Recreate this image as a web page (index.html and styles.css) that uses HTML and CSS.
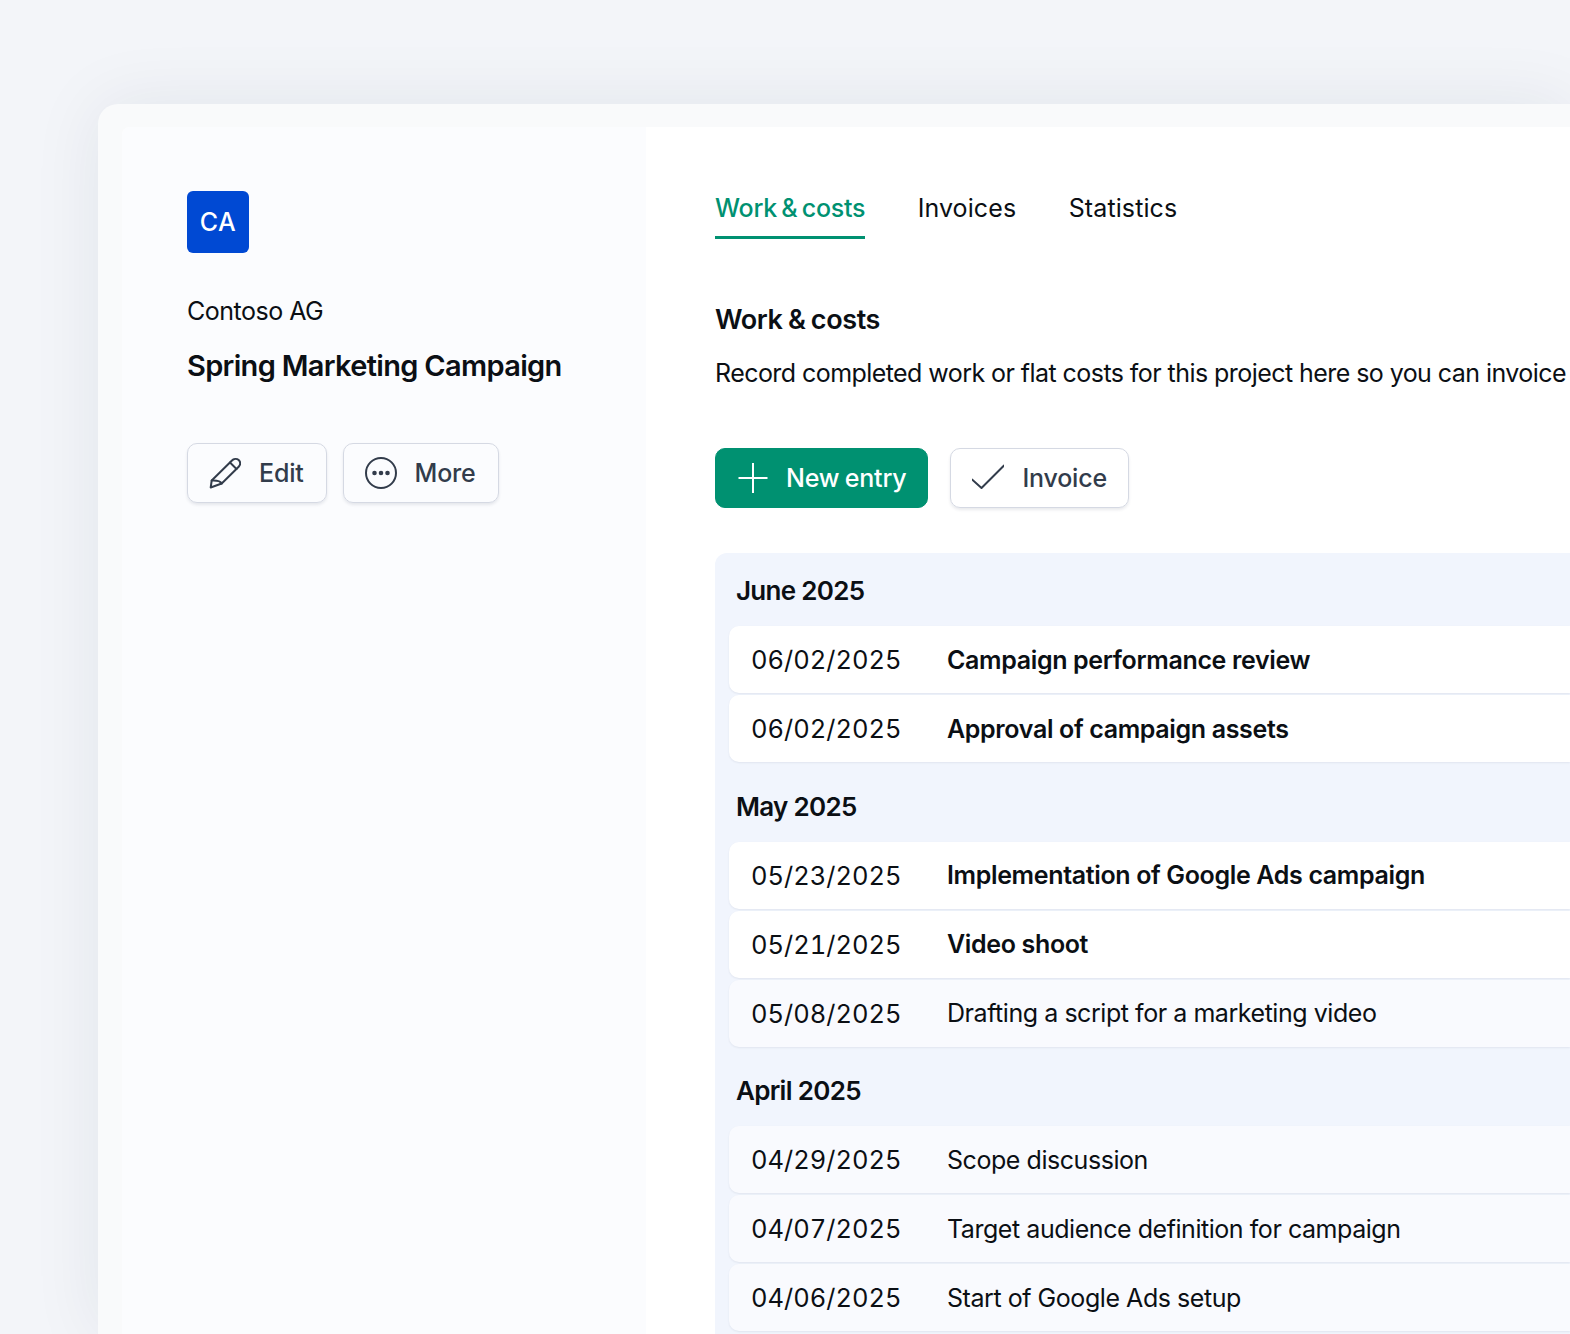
FILE: index.html
```html
<!DOCTYPE html>
<html lang="en">
<head>
<meta charset="utf-8">
<title>Spring Marketing Campaign</title>
<link rel="stylesheet" href="styles.css">
</head>
<body>
<div class="frame">
  <div class="inner">
    <aside class="sidebar">
      <div class="avatar">CA</div>
      <div class="client">Contoso AG</div>
      <h1 class="project">Spring Marketing Campaign</h1>
      <div class="actions">
        <button class="btn">
          <svg class="icon" viewBox="0 0 32 32" fill="none" stroke="currentColor" stroke-width="2" stroke-linecap="round" stroke-linejoin="round"><path d="M1.700 30.500L2.700 23.500 22.700 3.700c2-2 5-2.400 7-.6s2 4.600 0 6.600L12.700 26.500z"/><path d="M2.700 23.500c4-.2 8.500-.2 10 3"/><path d="M21 5.500l6.500 6.500"/></svg>
          <span>Edit</span>
        </button>
        <button class="btn">
          <svg class="icon" viewBox="0 0 32 32" fill="none" stroke="currentColor" stroke-width="2"><circle cx="16" cy="16" r="15"/><circle cx="9.500" cy="16" r="1.300" fill="currentColor"/><circle cx="16" cy="16" r="1.300" fill="currentColor"/><circle cx="22.500" cy="16" r="1.300" fill="currentColor"/></svg>
          <span>More</span>
        </button>
      </div>
    </aside>
    <main class="main">
      <nav class="tabs">
        <a class="tab active">Work &amp; costs</a>
        <a class="tab">Invoices</a>
        <a class="tab">Statistics</a>
      </nav>
      <h2 class="title">Work &amp; costs</h2>
      <p class="desc">Record completed work or flat costs for this project here so you can invoice</p>
      <div class="actions toolbar">
        <button class="btn primary">
          <svg class="icon" viewBox="0 0 32 32" fill="none" stroke="currentColor" stroke-width="2"><path d="M16 1v30M1.500 16h29"/></svg>
          <span>New entry</span>
        </button>
        <button class="btn">
          <svg class="icon" viewBox="0 0 32 32" fill="none" stroke="currentColor" stroke-width="2" stroke-linecap="round" stroke-linejoin="round"><path d="M0 17.500l9.500 8.500L32 3.500"/></svg>
          <span>Invoice</span>
        </button>
      </div>
      <section class="list">
        <h3 class="month">June 2025</h3>
        <div class="row"><span class="date">06/02/2025</span><span class="name strong">Campaign performance review</span></div>
        <div class="row"><span class="date">06/02/2025</span><span class="name strong">Approval of campaign assets</span></div>
        <h3 class="month">May 2025</h3>
        <div class="row"><span class="date">05/23/2025</span><span class="name strong">Implementation of Google Ads campaign</span></div>
        <div class="row"><span class="date">05/21/2025</span><span class="name strong">Video shoot</span></div>
        <div class="row muted"><span class="date">05/08/2025</span><span class="name">Drafting a script for a marketing video</span></div>
        <h3 class="month">April 2025</h3>
        <div class="row muted"><span class="date">04/29/2025</span><span class="name">Scope discussion</span></div>
        <div class="row muted"><span class="date">04/07/2025</span><span class="name">Target audience definition for campaign</span></div>
        <div class="row muted"><span class="date">04/06/2025</span><span class="name">Start of Google Ads setup</span></div>
      </section>
    </main>
  </div>
</div>
</body>
</html>
```
FILE: styles.css
```css
* { box-sizing: border-box; }
html, body { margin: 0; }
body {
  display: flex;
  width: 1570px;
  height: 1334px;
  overflow: hidden;
  background: #f3f5f9;
  padding: 104px 0 0 98px;
  font-family: Inter, "Liberation Sans", sans-serif;
  color: #0b0f14;
}
.frame {
  flex: 1;
  min-width: 0;
  background: #f9fafb;
  border-radius: 20px 0 0 0;
  padding: 23px 0 0 24px;
  box-shadow: 0 0 70px rgba(30, 40, 70, 0.08);
}
.inner {
  display: flex;
  height: 100%;
  background: #fff;
  border-radius: 8px 0 0 0;
}
.sidebar {
  flex: 0 0 524px;
  background: #fbfcfe;
  padding: 64px 0 0 65px;
  border-radius: 8px 0 0 0;
}
.avatar {
  width: 62px;
  height: 62px;
  background: #0049d3;
  border-radius: 6px;
  color: #fff;
  font-size: 25px;
  font-weight: 500;
  letter-spacing: 0.6px;
  display: flex;
  align-items: center;
  justify-content: center;
}
.client {
  margin-top: 42px;
  font-size: 25px;
  line-height: 32px;
  letter-spacing: -0.5px;
}
.project {
  margin: 23px 0 0;
  font-size: 29px;
  line-height: 32px;
  font-weight: 600;
  letter-spacing: -0.68px;
  white-space: nowrap;
}
.actions {
  display: flex;
  gap: 16px;
  margin-top: 61px;
}
.btn {
  display: flex;
  align-items: center;
  gap: 18px;
  height: 60px;
  padding: 0 21px;
  border: 1px solid #d5d9e3;
  border-radius: 10px;
  background: transparent;
  box-shadow: 0 2px 3px rgba(40, 50, 80, 0.1);
  color: #323c4b;
  font: 500 25px Inter, "Liberation Sans", sans-serif;
  letter-spacing: -0.2px;
}
.sidebar .btn { padding-right: 22px; }
.icon { width: 32px; height: 32px; flex: none; }
.btn.primary {
  gap: 17px;
  background: #009171;
  border-color: #009171;
  color: #fff;
  box-shadow: none;
  word-spacing: -1px;
}
.main {
  flex: 1;
  min-width: 0;
  overflow: hidden;
  padding: 60px 0 0 69px;
}
.tabs { display: flex; gap: 52.5px; }
.tab {
  font-size: 25px;
  line-height: 42px;
  padding-bottom: 7px;
  border-bottom: 3px solid transparent;
  letter-spacing: 0.1px;
}
.tab.active {
  color: #009171;
  border-bottom-color: #009171;
  font-weight: 500;
  letter-spacing: -0.27px;
  word-spacing: -2px;
}
.title {
  margin: 63px 0 0;
  font-size: 27px;
  line-height: 36px;
  font-weight: 600;
  letter-spacing: -0.4px;
  word-spacing: -1px;
}
.desc {
  margin: 17px 0 0;
  font-size: 25px;
  line-height: 36px;
  letter-spacing: -0.56px;
  white-space: nowrap;
}
.toolbar { gap: 22px; margin-top: 57px; }
.list {
  margin-top: 45px;
  background: #f1f5fd;
  border-radius: 12px 0 0 0;
  padding: 0 0 2px 14px;
}
.month {
  margin: 0 0 0 7px;
  height: 73px;
  padding-top: 20px;
  font-size: 26px;
  line-height: 36px;
  font-weight: 600;
  letter-spacing: -0.7px;
}
.row + .month { margin-top: 6.5px; }
.row {
  display: flex;
  align-items: center;
  height: 67px;
  margin-bottom: 2px;
  padding-left: 22px;
  background: #fff;
  border-radius: 10px 0 0 10px;
  box-shadow: 0 1px 2px rgba(40, 50, 80, 0.08);
  font-size: 25px;
}
.row.muted { background: #f9fafe; }
.date { width: 196px; font-size: 25.5px; font-variant-numeric: tabular-nums; }
.name { letter-spacing: -0.45px; }
.strong { font-weight: 600; letter-spacing: -0.35px; }
```
